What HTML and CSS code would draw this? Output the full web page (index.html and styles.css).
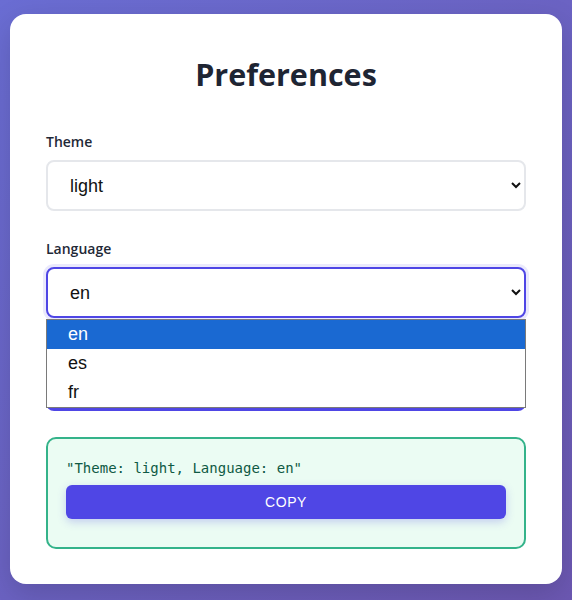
FILE: index.html
```html
<!DOCTYPE html>
<html lang="en">
<head>
<meta charset="utf-8">
<title>Preferences</title>
<link rel="stylesheet" href="styles.css">
</head>
<body>
  <main class="card">
    <h1 class="title">Preferences</h1>
    <div class="field">
      <label class="label" for="theme">Theme</label>
      <select id="theme" class="select">
        <option>light</option>
        <option>dark</option>
      </select>
    </div>
    <div class="field field-open">
      <label class="label" for="lang">Language</label>
      <div class="select-wrap">
        <select id="lang" class="select select-focus">
          <option>en</option>
          <option>es</option>
          <option>fr</option>
        </select>
        <ul class="dropdown">
          <li class="opt opt-active">en</li>
          <li class="opt">es</li>
          <li class="opt">fr</li>
        </ul>
      </div>
    </div>
    <button class="save">Save preferences</button>
    <section class="result">
      <code class="output">"Theme: light, Language: en"</code>
      <button class="copy">COPY</button>
    </section>
  </main>
</body>
</html>
```
FILE: styles.css
```css
* { box-sizing: border-box; }
html, body { margin: 0; height: 100%; }
body {
  background: linear-gradient(135deg, #6a6dd3 0%, #6c58b2 100%);
  padding: 14px 10px 16px;
  font-family: "Open Sans", "Noto Sans", sans-serif;
}
.card {
  background: #fff;
  border-radius: 16px;
  padding: 36px;
  height: 570px;
  box-shadow: 0 10px 30px rgba(0, 0, 0, 0.15);
}
.title {
  margin: 2px 0 36px;
  font-size: 30.5px;
  line-height: 44px;
  font-weight: 700;
  text-align: center;
  color: #1e2533;
}
.field { margin-bottom: 28px; }
.field-open { margin-bottom: 45px; }
.label {
  display: block;
  font-size: 14px;
  line-height: 20px;
  font-weight: 560;
  color: #1f2937;
  margin-bottom: 8px;
}
.select-wrap { position: relative; }
.select {
  display: block;
  width: 100%;
  height: 51px;
  padding: 0 18px;
  border: 2px solid #e5e7eb;
  border-radius: 8px;
  background: #fff;
  font-family: "Liberation Sans", Arial, sans-serif;
  font-size: 18px;
  color: #111;
  outline: none;
}
.select-focus {
  border-color: #4f46e5;
  box-shadow: 0 0 0 3px rgba(79, 70, 229, 0.12);
}
.dropdown {
  position: absolute;
  top: calc(100% + 1px);
  left: 0;
  right: 0;
  margin: 0;
  padding: 0;
  list-style: none;
  background: #fff;
  border: 1px solid #7a7a7a;
  z-index: 5;
}
.opt {
  height: 29px;
  line-height: 29px;
  padding-left: 21px;
  font-family: "Liberation Sans", Arial, sans-serif;
  font-size: 18px;
  color: #111;
}
.opt-active {
  background: #1a69d2;
  color: #fff;
}
.save {
  display: block;
  width: 100%;
  height: 48px;
  margin: 0;
  border: none;
  border-radius: 8px;
  background: #4f46e5;
  color: #fff;
  font-size: 16px;
}
.result {
  margin-top: 26px;
  border: 2px solid #34b38a;
  border-radius: 10px;
  background: #ebfcf3;
  padding: 19px 18px 28px;
}
.output {
  display: block;
  font-family: "DejaVu Sans Mono", "Liberation Mono", monospace;
  font-size: 14px;
  line-height: 20px;
  color: #0f5a44;
}
.copy {
  display: block;
  width: 100%;
  height: 34px;
  margin-top: 7px;
  border: none;
  border-radius: 6px;
  background: #4f46e5;
  color: #fff;
  font-family: "Liberation Sans", Arial, sans-serif;
  font-size: 14px;
  letter-spacing: 0.6px;
  box-shadow: 0 3px 8px rgba(79, 70, 229, 0.25);
}
```
